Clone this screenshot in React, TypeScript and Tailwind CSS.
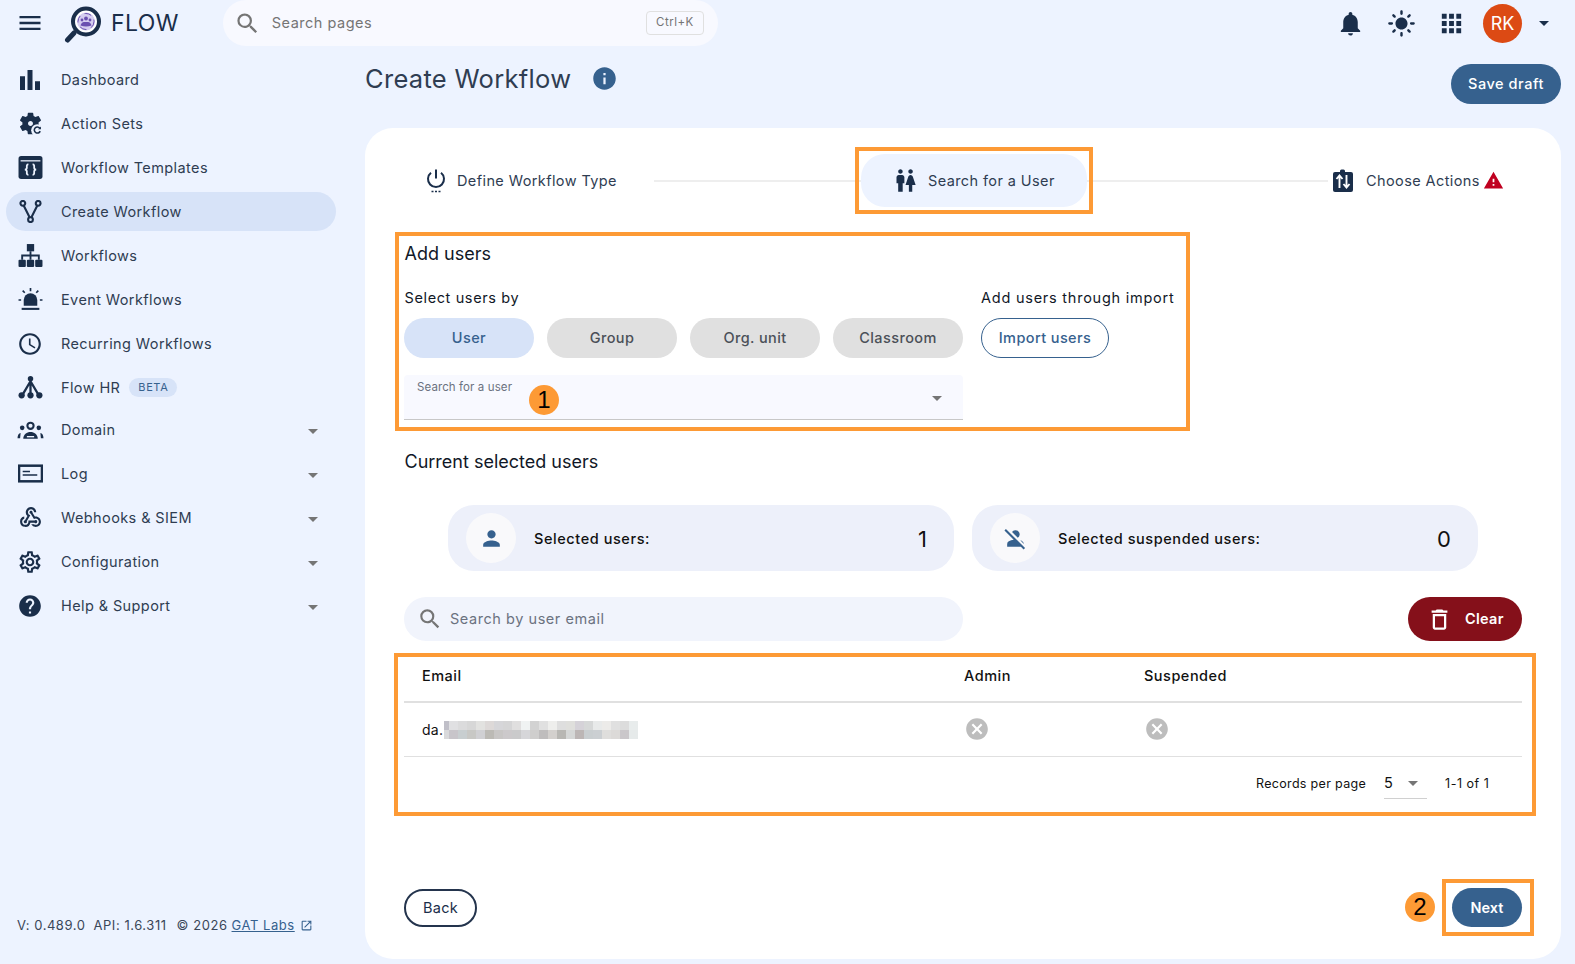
import type { ReactNode } from 'react';
import {
  MdApps,
  MdBarChart,
  MdCancel,
  MdDeleteOutline,
  MdHelp,
  MdInfo,
  MdLightMode,
  MdMenu,
  MdNotifications,
  MdOpenInNew,
  MdOutlineSchedule,
  MdOutlineSettings,
  MdPerson,
  MdPersonOff,
  MdSearch,
  MdWarning,
  MdWc,
  MdWebhook,
} from 'react-icons/md';

const ink = '#1a2e4a';

function GearRefreshIcon() {
  return (
    <svg viewBox="0 0 24 24" className="w-[27px] h-[27px]">
      <path
        fill={ink}
        d="M19.14 12.94c.04-.3.06-.61.06-.94 0-.32-.02-.64-.07-.94l2.03-1.58c.18-.14.23-.41.12-.61l-1.92-3.32c-.12-.22-.37-.29-.59-.22l-2.39.96c-.5-.38-1.03-.7-1.62-.94l-.36-2.54c-.04-.24-.24-.41-.48-.41h-3.84c-.24 0-.43.17-.47.41l-.36 2.54c-.59.24-1.13.57-1.62.94l-2.39-.96c-.22-.08-.47 0-.59.22L2.74 8.87c-.12.21-.08.47.12.61l2.03 1.58c-.05.3-.09.63-.09.94s.02.64.07.94l-2.03 1.58c-.18.14-.23.41-.12.61l1.92 3.32c.12.22.37.29.59.22l2.39-.96c.5.38 1.03.7 1.62.94l.36 2.54c.05.24.24.41.48.41h3.84c.24 0 .44-.17.47-.41l.36-2.54c.59-.24 1.13-.56 1.62-.94l2.39.96c.22.08.47 0 .59-.22l1.92-3.32c.12-.22.07-.47-.12-.61l-2.01-1.58zM12 14.2c-1.2 0-2.2-1-2.2-2.2s1-2.2 2.200-2.200 2.200 1 2.200 2.200-1 2.200-2.200 2.200z"
      />
      <circle cx="18" cy="18" r="5.400" fill="#edf3ff" />
      <path d="M20.600 18.800a2.700 2.700 0 1 1-.4-2.700" fill="none" stroke={ink} strokeWidth="1.400" />
      <path d="M21.300 14.600v2.600h-2.600z" fill={ink} />
    </svg>
  );
}

function TemplateIcon() {
  return (
    <svg viewBox="0 0 24 24" className="w-[25px] h-[25px]">
      <rect x="0.5" y="1" width="23" height="22" rx="2.500" fill={ink} />
      <rect x="2.500" y="5" width="19" height="1.200" fill="#edf3ff" />
      <path
        d="M10 9c-2 0-1.500 2-1.500 3s-.5 2-2 2c1.500 0 2 1 2 2s-.5 3 1.500 3M14 9c2 0 1.500 2 1.500 3s.5 2 2 2c-1.500 0-2 1-2 2s.5 3-1.500 3"
        fill="none"
        stroke="#edf3ff"
        strokeWidth="1.700"
      />
    </svg>
  );
}

function ForkIcon() {
  return (
    <svg viewBox="0 0 24 24" className="w-[23px] h-[23px]">
      <g fill="none" stroke={ink} strokeWidth="2.200">
        <circle cx="4" cy="3.500" r="2.500" />
        <circle cx="20" cy="3.500" r="2.500" />
        <circle cx="12" cy="20.500" r="2.500" />
        <path d="M5 6 11 18M19 6l-6 12" />
      </g>
    </svg>
  );
}

function SitemapIcon() {
  return (
    <svg viewBox="0 0 24 24" className="w-[25px] h-[25px]">
      <rect x="8.500" y="1" width="7" height="7" fill={ink} />
      <rect x="0.5" y="16" width="7" height="7" rx="1" fill={ink} />
      <rect x="8.500" y="16" width="7" height="7" rx="1" fill={ink} />
      <rect x="16.500" y="16" width="7" height="7" rx="1" fill={ink} />
      <path d="M12 8v8M4 16v-4h16v4" fill="none" stroke={ink} strokeWidth="1.800" />
    </svg>
  );
}

function SirenIcon() {
  return (
    <svg viewBox="0 0 24 24" className="w-[25px] h-[25px]">
      <path d="M5.500 18v-5.500a6.500 6.500 0 0 1 13 0V18z" fill={ink} />
      <rect x="3.500" y="20" width="17" height="2" fill={ink} />
      <path d="M12 1v3M4.500 3.500l2 2M19.500 3.500l-2 2M0.5 12.500h2.500M21 12.500h2.500" stroke={ink} strokeWidth="1.600" />
    </svg>
  );
}

function FlowHrIcon() {
  return (
    <svg viewBox="0 0 24 24" className="w-[25px] h-[25px]">
      <path d="M12 4v15M12 6 4 19.500M12 6l8 13.500" fill="none" stroke={ink} strokeWidth="2.200" />
      <circle cx="12" cy="3.500" r="2.600" fill={ink} />
      <circle cx="3.500" cy="19.500" r="3" fill={ink} />
      <circle cx="12" cy="19.500" r="3" fill={ink} />
      <circle cx="20.500" cy="19.500" r="3" fill={ink} />
    </svg>
  );
}

function DomainIcon() {
  return (
    <svg viewBox="0 0 26 24" className="w-[27px] h-[25px] mt-[3px]">
      <circle cx="13" cy="6.500" r="3" fill="none" stroke={ink} strokeWidth="2" />
      <circle cx="5" cy="8.500" r="2.200" fill={ink} />
      <circle cx="21" cy="8.500" r="2.200" fill={ink} />
      <path d="M6 19c0-4 3.500-6.500 7-6.500S20 15 20 19z" fill={ink} />
      <path d="M9.500 17h7" stroke="#edf3ff" strokeWidth="1.300" />
      <path d="M0.5 18.500c0-3 1.200-4.500 3-5l-.5 5zM25.500 18.500c0-3-1.200-4.500-3-5l.5 5z" fill={ink} />
    </svg>
  );
}

function LogIcon() {
  return (
    <svg viewBox="0 0 24 24" className="w-[25px] h-[25px]">
      <rect x="1" y="4.500" width="22" height="15" fill="none" stroke={ink} strokeWidth="2.400" />
      <path d="M4.500 10h7M4.500 13.500h14" stroke={ink} strokeWidth="1.500" />
    </svg>
  );
}

function PowerIcon() {
  return (
    <svg viewBox="0 0 24 24" className="w-[24px] h-[24px]">
      <path d="M7 3.800a8 8 0 1 0 10 0" fill="none" stroke={ink} strokeWidth="2" />
      <path d="M12 0.500v9" stroke={ink} strokeWidth="2" />
      <path d="M7.500 22.500h2M11 22.500h2M14.500 22.500h2" stroke={ink} strokeWidth="1.600" />
    </svg>
  );
}

function ClipboardArrowsIcon() {
  return (
    <svg viewBox="0 0 24 24" className="w-[24px] h-[24px]">
      <rect x="2" y="3" width="20" height="20" rx="2" fill={ink} />
      <rect x="9" y="0.5" width="5" height="4" rx="1.500" fill={ink} />
      <path d="M8.500 19V7M5.500 10l3-3.500 3 3.500M15.500 6v12M12.500 15l3 3.500 3-3.500" fill="none" stroke="#ffffff" strokeWidth="1.900" />
    </svg>
  );
}

function LogoIcon() {
  return (
    <svg viewBox="0 0 40 40" className="w-[40px] h-[40px]">
      <path d="M10 27 3.500 34" stroke={ink} strokeWidth="5" strokeLinecap="round" />
      <circle cx="22" cy="15.500" r="13" fill="#ffffff" stroke={ink} strokeWidth="4" />
      <circle cx="22" cy="15.500" r="9" fill="#d5cdf0" />
      <circle cx="22" cy="15.500" r="8" fill="none" stroke="#6a4fb0" strokeWidth="1" strokeDasharray="7 5" />
      <circle cx="22" cy="12.500" r="1.900" fill="#6a4fb0" />
      <circle cx="18" cy="14" r="1.400" fill="#6a4fb0" />
      <circle cx="26" cy="14" r="1.400" fill="#6a4fb0" />
      <path d="M16.500 19.500q1-3.500 3.500-3.500h4q2.500 0 3.500 3.500q-5.500 2-11 0z" fill="#6a4fb0" />
    </svg>
  );
}

function Caret({ className }: { className?: string }) {
  return (
    <span
      className={`block w-0 h-0 border-l-[5.5px] border-r-[5.5px] border-t-[5.5px] border-l-transparent border-r-transparent ${className ?? 'border-t-[#757575]'}`}
    />
  );
}

interface NavItem {
  label: string;
  icon: ReactNode;
  active?: boolean;
  beta?: boolean;
  caret?: boolean;
}

const navItems: NavItem[] = [
  { label: 'Dashboard', icon: <MdBarChart size={30} color={ink} /> },
  { label: 'Action Sets', icon: <GearRefreshIcon /> },
  { label: 'Workflow Templates', icon: <TemplateIcon /> },
  { label: 'Create Workflow', icon: <ForkIcon />, active: true },
  { label: 'Workflows', icon: <SitemapIcon /> },
  { label: 'Event Workflows', icon: <SirenIcon /> },
  { label: 'Recurring Workflows', icon: <MdOutlineSchedule size={26} color={ink} /> },
  { label: 'Flow HR', icon: <FlowHrIcon />, beta: true },
  { label: 'Domain', icon: <DomainIcon />, caret: true },
  { label: 'Log', icon: <LogIcon />, caret: true },
  { label: 'Webhooks & SIEM', icon: <MdWebhook size={25} color={ink} />, caret: true },
  { label: 'Configuration', icon: <MdOutlineSettings size={26} color={ink} />, caret: true },
  { label: 'Help & Support', icon: <MdHelp size={26} color={ink} />, caret: true },
];

// blurred part of the email, cell by cell
const blurTop = ['#c0bfc8', '#e0e0e2', '#dbdbdc', '#d7d7d7', '#e2e2e0', '#ddd9d8', '#d6d6d9', '#d5d5d6', '#e0dfdf', '#f0f3f3', '#d2d2d2', '#e0e0e0', '#eeeeec', '#dedede', '#dfdfdc', '#d5d2d8', '#d6d8d8', '#e8eaea', '#ecebe9', '#e0e0e0', '#dcdcdc', '#e8ecec'];
const blurBottom = ['#d9d9db', '#c8c5ca', '#c8ced0', '#c8c8c5', '#d0d0d3', '#bcbab5', '#c8c6c5', '#ccc9cb', '#cacacb', '#d6d6d9', '#cfcecd', '#bfbdbd', '#d3d0cd', '#b8b7b3', '#d5d7d6', '#bcb6b5', '#c9ced0', '#cbcfd2', '#dfdedc', '#dcdad8', '#cac7ca', '#e6eaea'];

function BlurRow({ colors }: { colors: string[] }) {
  return (
    <div className="flex h-[9px]">
      {colors.map((c, i) => (
        <span key={i} className="h-full w-[9px] first:w-[5px]" style={{ backgroundColor: c }} />
      ))}
    </div>
  );
}

function Sidebar() {
  return (
    <aside className="w-[365px] shrink-0 flex flex-col pt-[14px] pl-[6px]">
      {navItems.map((item) => (
        <div
          key={item.label}
          className={`w-[330px] h-[39px] shrink-0 mb-[5px] flex items-center rounded-full ${item.label === 'Domain' ? '-mt-[2px]' : ''} ${item.active ? 'bg-[#d7e3f8]' : ''}`}
        >
          <span className="w-[48px] flex justify-center shrink-0">{item.icon}</span>
          <span className="ml-[7px] text-[14.5px] tracking-[0.4px] text-[#2f3d52]">{item.label}</span>
          {item.beta && (
            <span className="ml-[9px] h-[19px] px-[9px] flex items-center rounded-full bg-[#d7e3f8] text-[#36618e] text-[11px] tracking-[0.6px]">
              BETA
            </span>
          )}
          {item.caret && (
            <span className="ml-auto mr-[18px] mt-[3px]">
              <Caret />
            </span>
          )}
        </div>
      ))}
      <div className="mt-auto mb-[29px] ml-[11px] flex items-center text-[13px] tracking-[0.55px] text-[#3a4658] whitespace-nowrap">
        <span>V: 0.489.0</span>
        <span className="ml-[8px]">API: 1.6.311</span>
        <span className="ml-[10px]">© 2026</span>
        <span className="ml-[4px] underline text-[#36618e]">GAT Labs</span>
        <MdOpenInNew size={13} color="#36618e" className="ml-[5px]" />
      </div>
    </aside>
  );
}

function TopBar() {
  return (
    <header className="h-[46px] shrink-0 flex items-center">
      <span className="ml-[16px] w-[28px] flex justify-center">
        <MdMenu size={28} color={ink} />
      </span>
      <span className="ml-[20px] mt-[5px]">
        <LogoIcon />
      </span>
      <span className="ml-[7px] text-[23px] tracking-[0.4px] text-[#1a2e4a]">FLOW</span>
      <div className="ml-[44px] w-[495px] h-[46px] rounded-full bg-[#f8f9ff] flex items-center pl-[11px] pr-[14px]">
        <MdSearch size={27} color="#757575" />
        <span className="ml-[11px] text-[14.5px] tracking-[0.5px] text-[#757575]">Search pages</span>
        <span className="ml-auto h-[24px] px-[9px] flex items-center rounded-[4px] border border-[#e0e0e0] text-[11.5px] text-[#757575] tracking-[0.5px]">
          Ctrl+K
        </span>
      </div>
      <div className="ml-auto flex items-center pr-[26px]">
        <MdNotifications size={29} color={ink} />
        <span className="ml-[22px]">
          <MdLightMode size={29} color={ink} />
        </span>
        <span className="ml-[21px]">
          <MdApps size={29} color={ink} />
        </span>
        <span className="ml-[17px] w-[39px] h-[39px] rounded-full bg-[#dc4a14] text-white text-[18px] flex items-center justify-center">
          RK
        </span>
        <span className="ml-[17px]">
          <Caret className="border-t-[#1a2e4a]" />
        </span>
      </div>
    </header>
  );
}

function Stepper() {
  return (
    <div className="flex items-center mt-[26px] h-[53px]">
      <div className="w-[250px] pl-[20px] flex items-center">
        <PowerIcon />
        <span className="ml-[9px] text-[14.5px] tracking-[0.4px] text-[#2f3d52] whitespace-nowrap">Define Workflow Type</span>
      </div>
      <span className="w-[207px] h-[2px] bg-[#eeeeee]" />
      <div className="w-[226px] h-[53px] rounded-[24px] bg-[#edf3ff] flex items-center pl-[31px]">
        <MdWc size={27} color={ink} />
        <span className="ml-[9px] text-[14.5px] tracking-[0.4px] text-[#2f3d52] whitespace-nowrap">Search for a User</span>
      </div>
      <span className="w-[241px] h-[2px] bg-[#eeeeee]" />
      <div className="ml-[3px] flex items-center">
        <ClipboardArrowsIcon />
        <span className="ml-[11px] text-[14.5px] tracking-[0.4px] text-[#2f3d52] whitespace-nowrap">Choose Actions</span>
        <MdWarning size={21} color="#c00020" className="ml-[3px]" />
      </div>
    </div>
  );
}

function AddUsers() {
  const modes = ['User', 'Group', 'Org. unit', 'Classroom'];
  return (
    <>
      <h2 className="mt-[34px] h-[24px] pl-[0.5px] flex items-center text-[18px] text-[#111827]">Add users</h2>
      <div className="flex mt-[23px]">
        <div className="w-[559px]">
          <p className="h-[20px] pl-[0.5px] flex items-center text-[14.5px] tracking-[0.62px] text-[#111827]">Select users by</p>
          <div className="flex gap-[13px] mt-[10px]">
            {modes.map((m, i) => (
              <button
                key={m}
                className={`w-[130px] h-[40px] rounded-full text-[14.5px] tracking-[0.4px] font-medium ${i === 0 ? 'bg-[#d7e3f8] text-[#36618e]' : 'bg-[#e0e0e0] text-[#4b5058]'}`}
              >
                {m}
              </button>
            ))}
          </div>
          <div className="mt-[17px] h-[45px] bg-[#f8f9ff] border-b border-[#c8c8c8] rounded-t-[4px] flex items-center justify-between pl-[13px] pr-[21px]">
            <span className="self-start mt-[4px] text-[11.5px] text-[#6b7280] tracking-[0.1px]">Search for a user</span>
            <span className="mt-[3px]">
              <Caret />
            </span>
          </div>
        </div>
        <div className="ml-[18px]">
          <p className="h-[20px] flex items-center text-[14.5px] tracking-[0.76px] text-[#111827] whitespace-nowrap">Add users through import</p>
          <button className="mt-[10px] w-[128px] h-[40px] rounded-full border border-[#36618e] text-[#36618e] text-[14.5px] tracking-[0.4px] font-medium">
            Import users
          </button>
        </div>
      </div>
    </>
  );
}

function StatCard({ icon, label, value }: { icon: ReactNode; label: string; value: string }) {
  return (
    <div className="w-[506px] h-[66px] rounded-[26px] bg-[#edf0fa] flex items-center pl-[18px] pr-[27px]">
      <span className="w-[50px] h-[50px] rounded-full bg-[#f9f9fb] flex items-center justify-center">{icon}</span>
      <span className="ml-[18px] mt-[1px] text-[14.5px] tracking-[0.57px] font-medium text-[#111111]">{label}</span>
      <span className="ml-auto mt-[2px] text-[22px] text-[#111111]">{value}</span>
    </div>
  );
}

function UsersTable() {
  return (
    <div className="mt-[12px] text-[#111111]">
      <div className="h-[50px] pb-[2px] border-b-2 border-[#e0e0e0] grid grid-cols-[542px_180px_1fr] items-center pl-[18px] text-[14.5px] tracking-[0.5px] font-medium">
        <span>Email</span>
        <span>Admin</span>
        <span>Suspended</span>
      </div>
      <div className="h-[54px] border-b border-[#e0e0e0] grid grid-cols-[542px_180px_1fr] items-center pl-[18px]">
        <div className="flex items-center text-[14px] tracking-[0.3px]">
          <span className="w-[22px]">da.</span>
          <div>
            <BlurRow colors={blurTop} />
            <BlurRow colors={blurBottom} />
          </div>
        </div>
        <MdCancel size={26} color="#bdbdbd" className="-mt-[1px]" />
        <MdCancel size={26} color="#bdbdbd" className="-mt-[1px]" />
      </div>
      <div className="h-[52px] flex items-center pl-[852px] text-[12.5px] tracking-[0.32px]">
        <span className="whitespace-nowrap mt-[2px]">Records per page</span>
        <div className="relative ml-[17px] w-[44px] flex items-center pl-[1px] text-[14.5px]">
          <span>5</span>
          <span className="ml-[15px]">
            <Caret />
          </span>
          <span className="absolute left-[1px] right-0 top-[26px] h-px bg-[#d0d0d0]" />
        </div>
        <span className="ml-[18px] mt-[2px] tracking-[0.5px] whitespace-nowrap">1-1 of 1</span>
      </div>
    </div>
  );
}

function MainCard() {
  const box = 'absolute border-4 border-[#fd9a35] pointer-events-none';
  const badge = 'absolute w-[30px] h-[30px] rounded-full bg-[#fd9a35] text-black text-[24px] flex items-center justify-center font-["Liberation_Sans",sans-serif]';
  return (
    <section className="relative flex-1 min-h-0 bg-white rounded-[28px] px-[39px] flex flex-col">
      <Stepper />
      <AddUsers />
      <h2 className="mt-[29px] h-[24px] pl-[0.5px] flex items-center text-[18px] text-[#111827]">Current selected users</h2>
      <div className="flex gap-[18px] ml-[44px] mt-[32px]">
        <StatCard icon={<MdPerson size={25} color="#36618e" />} label="Selected users:" value="1" />
        <StatCard icon={<MdPersonOff size={25} color="#36618e" />} label="Selected suspended users:" value="0" />
      </div>
      <div className="flex justify-between mt-[26px]">
        <div className="w-[559px] h-[44px] rounded-full bg-[#f1f4fc] flex items-center pl-[13px]">
          <MdSearch size={26} color="#757575" />
          <span className="ml-[7px] text-[14.5px] tracking-[0.55px] text-[#6b7280]">Search by user email</span>
        </div>
        <button className="w-[114px] h-[44px] rounded-full bg-[#85101a] text-white flex items-center pl-[18px] text-[14.5px] tracking-[0.3px] font-semibold">
          <MdDeleteOutline size={27} color="#ffffff" />
          <span className="ml-[12px]">Clear</span>
        </button>
      </div>
      <UsersTable />
      <div className="mt-auto mb-[32px] flex justify-between items-center">
        <button className="w-[73px] h-[38px] rounded-full border-2 border-[#24344d] text-[#1a2e4a] text-[14.5px] tracking-[0.3px]">
          Back
        </button>
        <button className="w-[70px] h-[39px] rounded-full bg-[#36618e] text-white text-[14.5px] font-semibold">
          Next
        </button>
      </div>

      {/* annotation frames laid over the form */}
      <div className={`${box} left-[490px] top-[19px] w-[238px] h-[67px]`} />
      <div className={`${box} left-[30px] top-[104px] w-[795px] h-[199px]`} />
      <div className={`${box} left-[29px] top-[525px] w-[1142px] h-[163px]`} />
      <div className={`${box} left-[1077px] top-[751px] w-[92px] h-[57px]`} />
      <span className={`${badge} left-[164px] top-[257px]`}>1</span>
      <span className={`${badge} left-[1040px] top-[764px]`}>2</span>
    </section>
  );
}

export default function App() {
  return (
    <div className="w-[1575px] h-[964px] overflow-hidden bg-[#edf3ff] flex flex-col font-['Inter',sans-serif]">
      <TopBar />
      <div className="flex flex-1 min-h-0">
        <Sidebar />
        <main className="flex-1 min-w-0 flex flex-col pr-[14px] pb-[5px]">
          <div className="h-[82px] shrink-0 flex justify-between items-start">
            <div className="flex items-center mt-[13px]">
              <h1 className="mt-[1px] text-[25.5px] tracking-[0.3px] text-[#2f3d52]">Create Workflow</h1>
              <MdInfo size={27} color="#36618e" className="ml-[20px]" />
            </div>
            <button className="mt-[18px] w-[110px] h-[40px] rounded-full bg-[#36618e] text-white text-[14.5px] tracking-[0.55px] font-medium">
              Save draft
            </button>
          </div>
          <MainCard />
        </main>
      </div>
    </div>
  );
}
